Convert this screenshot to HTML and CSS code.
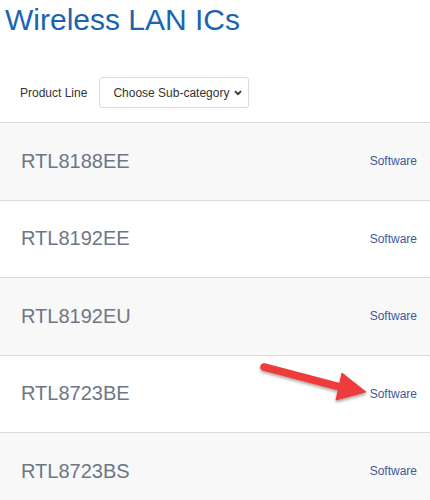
FILE: index.html
```html
<!DOCTYPE html>
<html lang="en">
<head>
    <meta charset="UTF-8">
    <meta name="viewport" content="width=device-width, initial-scale=1.0">
    <title>Wireless LAN ICs</title>
    <link rel="stylesheet" href="styles.css">
</head>
<body>
    <h1 class="title">Wireless LAN ICs</h1>
    <div class="filter">
        <label class="filter-label" for="subcat">Product Line</label>
        <div class="select-box">
            <select id="subcat" class="select">
                <option>Choose Sub-category</option>
            </select>
            <svg class="chevron" width="8" height="6" viewBox="0 0 8 6">
                <path d="M1 1.2 L4 4.2 L7 1.2" fill="none" stroke="#333" stroke-width="1.8"/>
            </svg>
        </div>
    </div>
    <div class="products">
        <div class="product">
            <span class="product-name">RTL8188EE</span>
            <a class="product-link" href="#">Software</a>
        </div>
        <div class="product">
            <span class="product-name">RTL8192EE</span>
            <a class="product-link" href="#">Software</a>
        </div>
        <div class="product">
            <span class="product-name">RTL8192EU</span>
            <a class="product-link" href="#">Software</a>
        </div>
        <div class="product">
            <span class="product-name">RTL8723BE</span>
            <a class="product-link" href="#">Software</a>
            <svg class="arrow" width="120" height="50" viewBox="0 0 120 50">
                <defs>
                    <filter id="shadow" x="-20%" y="-40%" width="140%" height="180%">
                        <feDropShadow dx="0" dy="2" stdDeviation="1.5" flood-color="#000" flood-opacity="0.35"/>
                    </filter>
                </defs>
                <g filter="url(#shadow)" fill="#ee3b3b" stroke="#ee3b3b">
                    <line x1="8" y1="13" x2="84" y2="33" stroke-width="7.5" stroke-linecap="round"/>
                    <polygon points="86,19 110,38 80,46" stroke-width="1" stroke-linejoin="round"/>
                </g>
            </svg>
        </div>
        <div class="product">
            <span class="product-name">RTL8723BS</span>
            <a class="product-link" href="#">Software</a>
        </div>
    </div>
</body>
</html>
```

FILE: styles.css
```css
body {
    font-family: "Liberation Sans", Arial, sans-serif;
    background-color: #fff;
    margin: 0;
    padding: 0;
}

.title {
    margin: 0;
    padding: 2px 0 0 5px;
    font-size: 30px;
    font-weight: normal;
    line-height: 36px;
    color: #1a64b0;
}

.filter {
    display: flex;
    align-items: center;
    gap: 12px;
    margin: 39px 0 14px 20px;
}

.filter-label {
    font-size: 12px;
    color: #333;
}

.select-box {
    display: flex;
    align-items: center;
    box-sizing: border-box;
    width: 150px;
    height: 31px;
    border: 1px solid #dcdcdc;
    border-radius: 3px;
    background-color: #fff;
    padding: 0 6px 0 13px;
}

.select {
    appearance: none;
    -webkit-appearance: none;
    border: none;
    outline: none;
    background: transparent;
    padding: 0;
    margin: 0;
    font-family: "Liberation Sans", Arial, sans-serif;
    font-size: 12px;
    color: #333;
    flex: 1;
}

.chevron {
    display: block;
}

.products {
    border-bottom: 1px solid #dcdcdc;
}

.product {
    position: relative;
    display: flex;
    align-items: center;
    justify-content: space-between;
    height: 76.5px;
    border-top: 1px solid #dcdcdc;
    padding: 0 13px 0 21px;
}

.product:nth-child(odd) {
    background-color: #f8f8f8;
}

.product-name {
    font-size: 20px;
    color: #6d7784;
}

.product-link {
    font-size: 12px;
    color: #3d5a99;
    text-decoration: none;
}

.arrow {
    position: absolute;
    left: 256px;
    top: -2px;
}
```
